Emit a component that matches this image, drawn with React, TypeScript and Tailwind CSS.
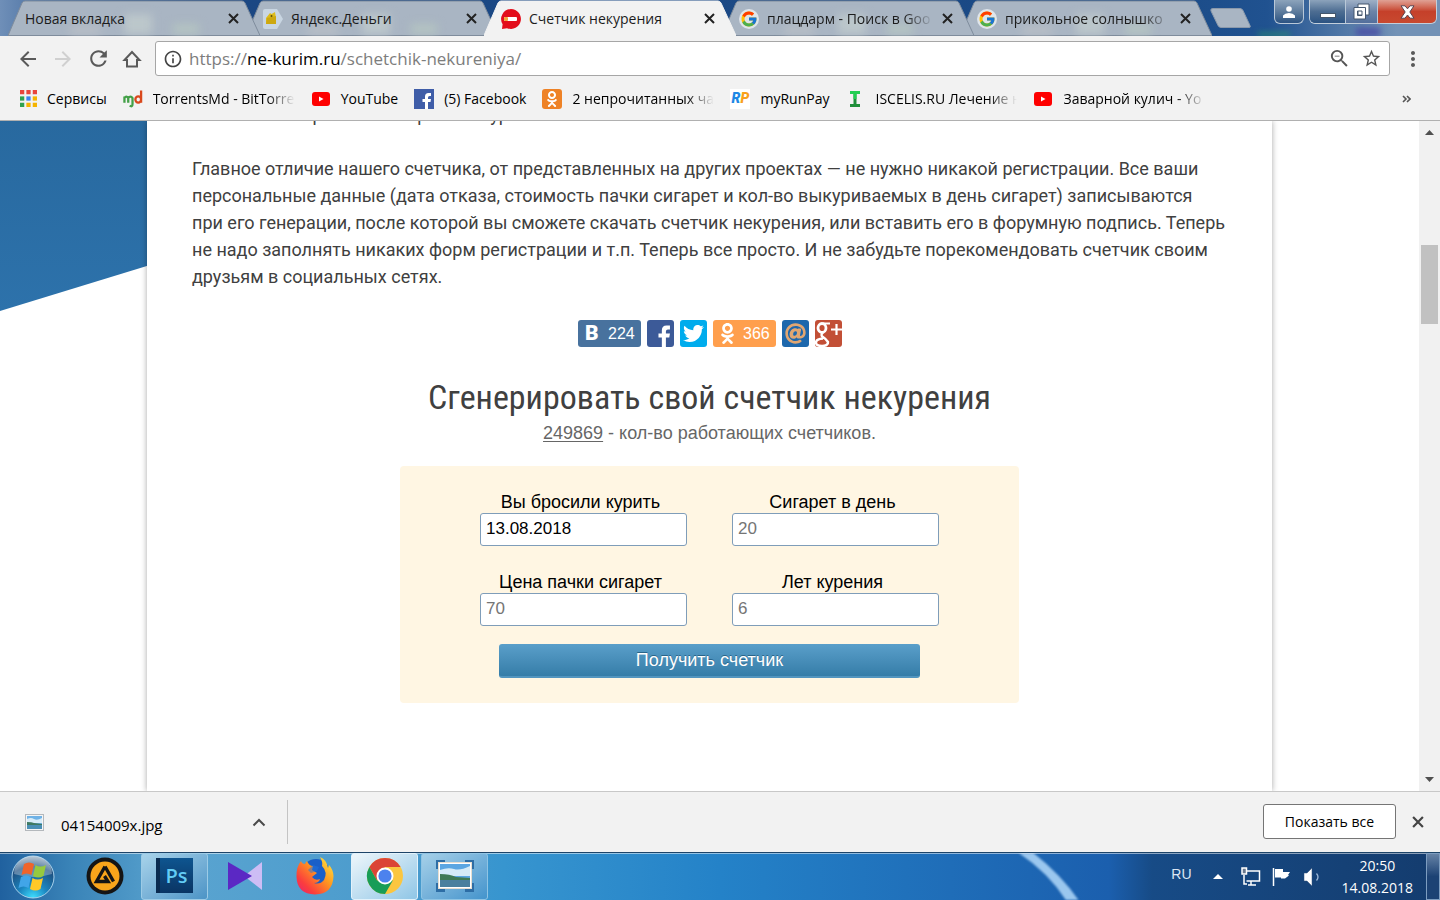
import { useState, type ReactNode } from 'react';
import {
  MdArrowBack,
  MdArrowForward,
  MdRefresh,
  MdOutlineInfo,
  MdZoomOut,
  MdStarBorder,
  MdMoreVert,
} from 'react-icons/md';
import { FaTwitter, FaOdnoklassniki, FaAt } from 'react-icons/fa';
import { FcGoogle } from 'react-icons/fc';

/* ---------- small icons ---------- */

function CrossIcon({ size = 11 }: { size?: number }) {
  return (
    <svg width={size} height={size} viewBox="0 0 11 11" fill="none" stroke="currentColor" strokeWidth="2">
      <path d="M1 1l9 9M10 1l-9 9" />
    </svg>
  );
}

function YandexMoneyIcon() {
  return (
    <svg width="20" height="20" viewBox="0 0 20 20">
      <path d="M2 0h12l6 10-6 10H2a2 2 0 0 1-2-2V2a2 2 0 0 1 2-2z" fill="#c9d6e2" />
      <path d="M3 9l4-5 1.500 1L12 3l1 6v6H3z" fill="#dcbb1c" />
      <path d="M3 15l1-6 9-2v8z" fill="#cda80f" />
      <circle cx="8.500" cy="7" r="1" fill="#5f5000" />
    </svg>
  );
}

function StopSmokeIcon() {
  return (
    <svg width="20" height="20" viewBox="0 0 20 20">
      <path d="M10 0a10 10 0 1 1-4 19.200L1 20l.6-4.800A10 10 0 0 1 10 0z" fill="#e30d1b" />
      <rect x="3" y="8" width="13" height="4" rx="1" fill="#fff" />
      <rect x="3" y="8" width="4" height="4" rx="1" fill="#f3a43b" />
    </svg>
  );
}

function GoogleIcon() {
  return (
    <span className="flex h-5 w-5 items-center justify-center rounded-full bg-[#dfe5eb]">
      <FcGoogle size={18} />
    </span>
  );
}

function HomeIcon() {
  return (
    <svg width="20" height="20" viewBox="0 0 20 20" fill="none" stroke="#5a5a5a" strokeWidth="2">
      <path d="M2.500 11L10 3l7.500 8H15v6.500H5V11z" />
    </svg>
  );
}

function AppsIcon() {
  const colors = ['#e8453c', '#e8453c', '#e8453c', '#2fa14f', '#3b82f0', '#f5b400', '#2fa14f', '#f5b400', '#f5b400'];
  return (
    <svg width="17" height="17" viewBox="0 0 16 16">
      {colors.map((c, i) => (
        <rect key={i} x={(i % 3) * 6} y={Math.floor(i / 3) * 6} width="4" height="4" fill={c} />
      ))}
    </svg>
  );
}

function MdLogo() {
  return (
    <svg width="20" height="20" viewBox="0 0 21 20" fill="none" strokeWidth="2.400">
      <path d="M1.500 14V7.500M1.500 9q2-3 4 0v5M5.500 9q2.500-3 4.500 0v6q0 4-3 2" stroke="#43a047" />
      <path d="M19 1v13M19 10.500a3 3.300 0 1 0-6 0a3 3.300 0 1 0 6 0" stroke="#d9481c" />
    </svg>
  );
}

function YoutubeIcon() {
  return (
    <svg width="20" height="20" viewBox="0 0 20 20">
      <rect x="1" y="3" width="18" height="14" rx="3" fill="#fe0000" />
      <path d="M8 7.500v5l4.500-2.500z" fill="#fff" />
    </svg>
  );
}

function FacebookIcon({ size, fill }: { size: number; fill: string }) {
  return (
    <svg width={size} height={size} viewBox="0 0 20 20">
      <rect width="20" height="20" fill={fill} />
      <path d="M11 20v-7H8.500v-3H11V7.500Q11 4 14.500 4H17v3h-1.500q-1.500 0-1.500 1.500V10h3l-.5 3H14v7z" fill="#fff" />
    </svg>
  );
}

function OkIcon() {
  return (
    <span className="flex h-5 w-5 items-center justify-center rounded-[3px] bg-[#ee8226]">
      <FaOdnoklassniki size={16} color="#fff" />
    </span>
  );
}

function RunPayIcon() {
  return (
    <span className="flex h-5 w-5 items-center justify-center bg-white font-['Roboto'] text-[14px] font-black italic">
      <span className="text-[#1e88e5]">R</span>
      <span className="text-[#f9a11b]">P</span>
    </span>
  );
}

function IscelisIcon() {
  return (
    <svg width="20" height="20" viewBox="0 0 20 20">
      <path d="M5 2h10v3h-3.500v10H15v3H5v-3h3.500V5H5z" fill="#1f8f3a" />
      <path d="M5 2h10v3h-3.500v5h-3V5H5z" fill="#22cf52" />
    </svg>
  );
}

function PictureIcon() {
  return (
    <svg width="19" height="17" viewBox="0 0 19 17">
      <rect x=".5" y=".5" width="18" height="16" fill="#f5f5f5" stroke="#b4b8bc" />
      <rect x="2" y="2" width="15" height="13" fill="#6fb2e6" />
      <path d="M2 5q4-2 7 0t8-1v5H2z" fill="#d8ecf8" />
      <path d="M2 8q5 0 7 1l8 1v2H2z" fill="#3f7a62" />
      <path d="M2 11h15v4H2z" fill="#4a8fb5" />
    </svg>
  );
}

/* ---------- tab strip ---------- */

interface Tab {
  title: string;
  icon?: ReactNode;
  active?: boolean;
  z: string;
}

const TABS: Tab[] = [
  { title: 'Новая вкладка', z: 'z-[4]' },
  { title: 'Яндекс.Деньги', icon: <YandexMoneyIcon />, z: 'z-[3]' },
  { title: 'Счетчик некурения', icon: <StopSmokeIcon />, active: true, z: 'z-[5]' },
  { title: 'плацдарм - Поиск в Goo', icon: <GoogleIcon />, z: 'z-[2]' },
  { title: 'прикольное солнышко', icon: <GoogleIcon />, z: 'z-[1]' },
];

function TabItem({ tab }: { tab: Tab }) {
  return (
    <div className={`relative -mr-[14px] flex h-9 w-[252px] min-w-0 items-center gap-2 pt-px pr-[21px] pl-[17px] ${tab.z}`}>
      <svg className="absolute inset-0 h-full w-full" viewBox="0 0 252 36" preserveAspectRatio="none">
        <path
          d="M0 35.500L14 3q1-2 3-2H234q2 0 3 2L252 35.500z"
          fill={tab.active ? '#f2f2f2' : '#a9b5c3'}
          stroke={tab.active ? '#f2f2f2' : '#7f8c9c'}
        />
        {!tab.active && (
          <g className="blur-[4px]">
            <rect x="116" y="14" width="28" height="20" fill="#bcc7cb" />
            <rect x="62" y="26" width="30" height="8" fill="#b9bfc6" />
            <rect x="165" y="24" width="26" height="10" fill="#b4c4c2" />
          </g>
        )}
      </svg>
      {tab.icon && <span className="relative shrink-0">{tab.icon}</span>}
      <span
        className={`relative min-w-0 flex-1 overflow-hidden whitespace-nowrap text-[14px] leading-5 text-[#1c1c1c] ${
          tab.title.length > 18 ? '[mask-image:linear-gradient(to_right,black_82%,transparent)]' : ''
        }`}
      >
        {tab.title}
      </span>
      <button aria-label="Закрыть вкладку" className="relative shrink-0 text-[#222]">
        <CrossIcon />
      </button>
    </div>
  );
}

function WindowControls() {
  const glass = 'border border-t-0 border-[#b9c8d8] bg-linear-to-b from-[#8ca3bb] via-[#5e7c9d] via-50% to-[#2b5382]';
  return (
    <div className="ml-auto flex items-start gap-[5px] pr-[3px]">
      <button aria-label="Пользователь" className={`flex h-6 w-[30px] items-center justify-center rounded-b-md ${glass}`}>
        <svg width="12" height="12" viewBox="0 0 12 12" fill="#fff">
          <circle cx="6" cy="3" r="2.800" />
          <path d="M0 12V9.500Q2 7 6 7t6 2.500V12z" />
        </svg>
      </button>
      <div className="flex h-6 overflow-hidden rounded-b-md border border-t-0 border-[#c3cfdb]">
        <button aria-label="Свернуть" className="flex w-[35px] items-end justify-center bg-linear-to-b from-[#8ca3bb] via-[#4d6d92] to-[#2b5382] pb-[5px]">
          <svg width="16" height="5" viewBox="0 0 16 5">
            <rect x=".5" y=".5" width="15" height="4" fill="#fff" stroke="#44566b" />
          </svg>
        </button>
        <button aria-label="Развернуть" className="flex w-[33px] items-center justify-center border-x border-[#b9c8d8] bg-linear-to-b from-[#9fb0c6] via-[#6c84a8] to-[#54709c]">
          <svg width="17" height="17" viewBox="0 0 17 17" fill="#fff" stroke="#45566c">
            <path d="M5 1h11v11H5z" />
            <path fillRule="evenodd" d="M1 4.500h11.500V16H1zM4.500 8v4.500H9V8z" />
          </svg>
        </button>
        <button aria-label="Закрыть" className="flex w-[58px] items-center justify-center bg-linear-to-b from-[#dfa195] via-[#c5402a] via-50% to-[#c8492f]">
          <svg width="15" height="14" viewBox="0 0 15 14">
            <path d="M1 .8h4l2.500 3 2.500-3h4L9.800 7l4.200 6.200h-4L7.500 10 5 13.200H1L5.200 7z" fill="#fff" stroke="#5b4550" />
          </svg>
        </button>
      </div>
    </div>
  );
}

function TabStrip() {
  return (
    <header className="relative flex h-9 shrink-0 overflow-hidden bg-[linear-gradient(90deg,#6f8fb8_0%,#4c72a3_3%,#1b4783_14%,#1a4a86_80%,#205290_88%,#7392b6_97%)] pl-2">
      {TABS.map((t) => (
        <TabItem key={t.title} tab={t} />
      ))}
      <button aria-label="Новая вкладка" className="ml-[12px] self-center">
        <svg width="41" height="20" viewBox="0 0 41 20">
          <path d="M3 .5h27q2 0 3 2l7 15q1 2-1 2H11q-2 0-3-2L1 3Q0 .5 3 .5z" fill="#a9b5c3" stroke="#8b99ab" />
        </svg>
      </button>
      <WindowControls />
      {/* wallpaper showing through the glass */}
      <div className="absolute right-[150px] bottom-0 h-[3px] w-8 bg-[#2f9a6c] blur-[3px]" />
      <div className="absolute right-[60px] bottom-0 h-2 w-6 bg-[#4a4fa5] blur-[3px]" />
    </header>
  );
}

/* ---------- toolbar + bookmarks ---------- */

function Toolbar() {
  return (
    <div className="flex h-[45px] shrink-0 items-center bg-[#f2f2f2] pr-[15px] pl-4 text-[#5a5a5a]">
      <div className="flex items-center gap-[11px]">
        <button aria-label="Назад"><MdArrowBack size={24} /></button>
        <button aria-label="Вперед" className="text-[#d0d0d0]"><MdArrowForward size={24} /></button>
        <button aria-label="Обновить"><MdRefresh size={25} /></button>
        <button aria-label="Домой"><HomeIcon /></button>
      </div>
      <label className="mr-[11px] ml-[13px] flex h-[35px] min-w-0 flex-1 items-center rounded-[3px] border border-[#a6a6a6] bg-white px-[7px]">
        <MdOutlineInfo size={20} className="mr-[6px] shrink-0 text-[#444]" />
        <span className="min-w-0 flex-1 whitespace-nowrap text-[17px] leading-6 text-[#7d7d7d]">
          https://<span className="text-black">ne-kurim.ru</span>/schetchik-nekureniya/
        </span>
        <span className="flex items-center gap-[10px] text-[#555]">
          <MdZoomOut size={23} />
          <MdStarBorder size={21} />
        </span>
      </label>
      <button aria-label="Меню"><MdMoreVert size={24} /></button>
    </div>
  );
}

const BOOKMARKS: { title: string; icon: ReactNode; faded?: boolean }[] = [
  { title: 'Сервисы', icon: <AppsIcon /> },
  { title: 'TorrentsMd - BitTorre', icon: <MdLogo />, faded: true },
  { title: 'YouTube', icon: <YoutubeIcon /> },
  { title: '(5) Facebook', icon: <FacebookIcon size={20} fill="#3f5da8" /> },
  { title: '2 непрочитанных ча', icon: <OkIcon />, faded: true },
  { title: 'myRunPay', icon: <RunPayIcon /> },
  { title: 'ISCELIS.RU Лечение н', icon: <IscelisIcon />, faded: true },
  { title: 'Заварной кулич - Yo', icon: <YoutubeIcon />, faded: true },
];

function BookmarksBar() {
  return (
    <nav className="flex h-10 shrink-0 items-center gap-4 border-b border-[#b0b0b0] bg-[#f2f2f2] pr-[29px] pb-1 pl-5 text-[14px] text-black">
      {BOOKMARKS.map((b) => (
        <a key={b.title} href="#" className="flex shrink-0 items-center gap-[10px]">
          {b.icon}
          <span
            className={
              b.faded
                ? 'w-[142px] overflow-hidden whitespace-nowrap [mask-image:linear-gradient(to_right,black_80%,transparent)]'
                : 'whitespace-nowrap'
            }
          >
            {b.title}
          </span>
        </a>
      ))}
      <button aria-label="Другие закладки" className="ml-auto text-[#555]">
        <svg width="9" height="8" viewBox="0 0 9 8" fill="none" stroke="currentColor" strokeWidth="1.600">
          <path d="M1 1l3 3-3 3M5 1l3 3-3 3" />
        </svg>
      </button>
    </nav>
  );
}

/* ---------- page ---------- */

function ShareButtons() {
  const base = 'flex h-[27px] items-center overflow-hidden rounded-[3px]';
  return (
    <div className="mt-[30px] flex justify-center gap-[6px] pl-px font-['Liberation_Sans',sans-serif] text-base text-white">
      <a href="#" className={`${base} w-[63px] bg-[#48729e]`}>
        <b className="w-[30px] pl-[7px] font-['Roboto'] text-[21px] font-black">В</b>224
      </a>
      <a href="#" aria-label="Facebook" className={`${base} w-[27px]`}>
        <FacebookIcon size={27} fill="#3c5a98" />
      </a>
      <a href="#" aria-label="Twitter" className={`${base} w-[27px] justify-center bg-[#00aced]`}>
        <FaTwitter size={21} />
      </a>
      <a href="#" className={`${base} w-[63px] bg-[#ff9f4d]`}>
        <span className="w-[30px] pl-1"><FaOdnoklassniki size={21} /></span>366
      </a>
      <a href="#" aria-label="Мой Мир" className={`${base} w-[27px] justify-center bg-[#1d67ac] text-[#e0a672]`}>
        <FaAt size={21} />
      </a>
      <a href="#" aria-label="Google+" className={`${base} w-[27px] justify-center bg-[#c24f36]`}>
        <svg width="27" height="27" viewBox="0 0 27 27" fill="none" stroke="#fff">
          <ellipse cx="7" cy="8" rx="4" ry="4.500" strokeWidth="2.800" />
          <path d="M15 3.500H8" strokeWidth="2" />
          <path d="M8 12.500q-3 2.500 0 4.500t5 5q0 4-6 4t-6-3.500q0-3.500 7-4" strokeWidth="2.400" />
          <path d="M16 9.500h11M21.500 4v11" strokeWidth="2.200" />
        </svg>
      </a>
    </div>
  );
}

interface FieldProps {
  id: string;
  label: string;
  placeholder?: string;
  value: string;
  onChange: (v: string) => void;
}

function Field({ id, label, placeholder, value, onChange }: FieldProps) {
  return (
    <div className="flex flex-col">
      <label htmlFor={id} className="h-[21px] pr-[6px] text-center text-[18px] leading-[21px]">
        {label}
      </label>
      <input
        id={id}
        type="text"
        value={value}
        placeholder={placeholder}
        onChange={(e) => onChange(e.target.value)}
        className="h-[33px] w-full rounded-[3px] border border-[#7f9db9] bg-white px-[5px] pb-[2px] text-[17px] text-black outline-none placeholder:text-[#757575]"
      />
    </div>
  );
}

function CounterForm() {
  const [date, setDate] = useState('13.08.2018');
  const [perDay, setPerDay] = useState('');
  const [price, setPrice] = useState('');
  const [years, setYears] = useState('');

  return (
    <form
      onSubmit={(e) => e.preventDefault()}
      className="mx-auto mt-[19px] flex w-[619px] max-w-full flex-col items-center rounded-[4px] bg-[#fff6e3] pt-[26px] pb-[25px] text-black"
    >
      <div className="grid grid-cols-[207px_207px] gap-x-[45px] gap-y-[26px]">
        <Field id="date" label="Вы бросили курить" value={date} onChange={setDate} />
        <Field id="perDay" label="Сигарет в день" placeholder="20" value={perDay} onChange={setPerDay} />
        <Field id="price" label="Цена пачки сигарет" placeholder="70" value={price} onChange={setPrice} />
        <Field id="years" label="Лет курения" placeholder="6" value={years} onChange={setYears} />
      </div>
      <button
        type="submit"
        className="mt-[18px] h-[34px] w-[421px] rounded-[3px] border-b-2 border-[#5295bf] bg-linear-to-b from-[#5a9fca] to-[#357da8] text-[18px] text-white [text-shadow:0_-1px_0_#2a6488]"
      >
        Получить счетчик
      </button>
    </form>
  );
}

function ScrollBar() {
  return (
    <div className="flex w-[21px] shrink-0 flex-col items-center bg-[#f1f1f1] py-[9px]">
      <svg width="9" height="5" viewBox="0 0 9 5" className="shrink-0"><path d="M0 5l4.500-5L9 5z" fill="#505050" /></svg>
      <div className="mt-[110px] h-[79px] w-[17px] shrink-0 bg-[#c1c1c1]" />
      <svg width="9" height="5" viewBox="0 0 9 5" className="mt-auto shrink-0"><path d="M0 0l4.500 5L9 0z" fill="#505050" /></svg>
    </div>
  );
}

function Page() {
  return (
    <div className="flex min-h-0 flex-1 overflow-hidden bg-white">
      <div className="relative min-w-0 flex-1 overflow-hidden">
        <div className="absolute top-0 left-0 h-[190px] w-[620px] bg-linear-to-b from-[#28699f] to-[#2d72ab] [clip-path:polygon(0_0,100%_0,0_100%)]" />
        <main className="relative mx-auto h-full max-w-[1125px] overflow-hidden bg-white px-[45px] font-['Liberation_Sans',sans-serif] shadow-[0_0_6px_rgba(0,0,0,0.35)]">
          <div className="-mt-[20px] font-['Roboto',sans-serif] text-[18px] leading-[27px] text-[#404040]">
            <p className="mb-[27px]">Поможет вам решать и мерить некурение</p>
            <p>
              Главное отличие нашего счетчика, от представленных на других проектах — не нужно никакой регистрации. Все
              ваши персональные данные (дата отказа, стоимость пачки сигарет и кол-во выкуриваемых в день сигарет)
              записываются при{'\u00a0'}его генерации, после которой вы сможете скачать счетчик некурения, или вставить
              его в форумную подпись. Теперь не{'\u00a0'}надо заполнять никаких форм регистрации и т.п. Теперь все
              просто. И не забудьте порекомендовать счетчик своим друзьям в социальных сетях.
            </p>
          </div>
          <ShareButtons />
          <h2 className="mt-[30px] text-center font-['Roboto_Condensed',sans-serif] text-[34px] leading-10 text-[#404040]">
            Сгенерировать свой счетчик некурения
          </h2>
          <p className="mt-[3px] text-center text-[18px] leading-[27px] text-[#666]">
            <u className="underline-offset-2">249869</u> - кол-во работающих счетчиков.
          </p>
          <CounterForm />
        </main>
      </div>
      <ScrollBar />
    </div>
  );
}

/* ---------- download shelf ---------- */

function DownloadBar() {
  return (
    <div className="flex h-[61px] shrink-0 items-center border-t border-[#c8c8c8] bg-[#f2f2f2] pr-4 pl-[25px] text-black">
      <div className="flex h-[44px] w-[263px] items-center border-r border-[#c4c4c4] pr-[21px]">
        <PictureIcon />
        <span className="ml-[17px] flex-1 pt-[6px] text-[15px]">04154009x.jpg</span>
        <button aria-label="Меню загрузки">
          <svg width="14" height="9" viewBox="0 0 14 9" fill="none" stroke="#4a4a4a" strokeWidth="2"><path d="M1.500 7.500L7 2l5.500 5.500" /></svg>
        </button>
      </div>
      <button className="mb-px ml-auto h-[35px] w-[133px] rounded-[3px] border border-[#757575] bg-white text-[14px]">Показать все</button>
      <button aria-label="Закрыть панель" className="mb-px ml-4 text-[#444]">
        <CrossIcon size={12} />
      </button>
    </div>
  );
}

/* ---------- taskbar ---------- */

function StartOrb() {
  return (
    <svg width="44" height="44" viewBox="0 0 44 44">
      <defs>
        <radialGradient id="orb" cx=".5" cy="1" r="1">
          <stop offset="0" stopColor="#3fe0ff" />
          <stop offset=".35" stopColor="#1b86c0" />
          <stop offset=".75" stopColor="#1d4f80" />
          <stop offset="1" stopColor="#9fb4c6" />
        </radialGradient>
      </defs>
      <circle cx="22" cy="22" r="21" fill="url(#orb)" stroke="#a7d0ea" />
      <path d="M3 19a19 18 0 0 1 38 0q-19 6-38 0z" fill="#fff" opacity=".3" />
      <path d="M13 9q5-3 10 0l-2.500 11q-5-3-10 0z" fill="#f0642a" />
      <path d="M24.500 10q5 3 10.500 0l-2.500 11q-5 3-10.500 0z" fill="#96c93f" />
      <path d="M10 22q5-3 10 0l-2.500 11q-5-3-10 0z" fill="#41a5e8" />
      <path d="M21.500 23q5 3 10.500 0l-2.500 11q-5 3-10.500 0z" fill="#ffc928" />
    </svg>
  );
}

function AimpIcon() {
  return (
    <svg width="38" height="38" viewBox="0 0 38 38">
      <circle cx="19" cy="19" r="18.500" fill="#151515" />
      <circle cx="19" cy="19" r="14.500" fill="#f9a51b" />
      <path d="M19 9.500L10.500 24.500H22l-3.500-5.500M19 9.500l8.500 15" fill="none" stroke="#151515" strokeWidth="3.400" />
    </svg>
  );
}

function PhotoshopIcon() {
  return (
    <span className="flex h-[35px] w-[37px] items-center justify-center border-l-4 border-[#0a2b50] bg-linear-to-b from-[#0e5590] to-[#0a3564] text-[20px] font-semibold text-[#63ccf5]">
      Ps
    </span>
  );
}

function KmpIcon() {
  return (
    <svg width="36" height="30" viewBox="0 0 36 30">
      <path d="M35 1v28L17 15z" fill="#cdbdf5" />
      <path d="M1 1v28l24-14z" fill="#5b28c4" />
    </svg>
  );
}

function FirefoxIcon() {
  return (
    <svg width="38" height="38" viewBox="0 0 38 38">
      <defs>
        <linearGradient id="fox" x1="1" y1="0" x2="0" y2="1">
          <stop offset="0" stopColor="#fff04a" />
          <stop offset=".4" stopColor="#ff9a1f" />
          <stop offset=".75" stopColor="#fb3d3d" />
          <stop offset="1" stopColor="#e3207a" />
        </linearGradient>
      </defs>
      <circle cx="20" cy="16" r="14" fill="#1a5fc8" />
      <path d="M24 0q3 5 2 9 6 6 2 14-4 5-10 3 5 0 6-4-5 2-8-2l5-4-5-3 1-4q-4 0-6-5-2 2-2 3-3 0-4-3Q0 10 0.500 20 1 37 19 37.500 37 37 37.500 19 37 12 33 8l-1 3Q31 3 24 0z" fill="url(#fox)" />
      <path d="M17 8l6 2-2 4-6 2-3-3z" fill="#1f74e0" opacity=".5" />
    </svg>
  );
}

function ChromeIcon() {
  return (
    <svg width="38" height="38" viewBox="0 0 38 38">
      <circle cx="19" cy="19" r="18" fill="#fbc640" />
      <path d="M3.400 10A18 18 0 0 1 34.600 10H19L11 23.500z" fill="#db4437" />
      <path d="M3.400 10A18 18 0 0 0 19 37L26.800 23.500 11 23.500z" fill="#189d57" />
      <circle cx="19" cy="19" r="8.500" fill="#fff" />
      <circle cx="19" cy="19" r="6.600" fill="#4c82ee" />
    </svg>
  );
}

function PhotoViewerIcon() {
  return (
    <svg width="38" height="32" viewBox="0 0 38 32">
      <path d="M0 0h9v9H0zM29 0h9v9h-9zM0 23h9v9H0zM29 23h9v9h-9z" fill="#2d6da5" />
      <rect x="2.500" y="2.500" width="33" height="26" fill="#fff" stroke="#e6ddd0" />
      <rect x="4" y="4" width="30" height="23" fill="#5ba6e2" />
      <path d="M4 10q8-3 14-1t16-3v10H4z" fill="#d5ebf8" />
      <path d="M4 14q10 0 16 3l14 1v3H4z" fill="#3f7a55" />
      <path d="M4 20h30v7H4z" fill="#4a7f9e" />
    </svg>
  );
}

const TASKS: { name: string; icon: ReactNode; frame: string }[] = [
  { name: 'AIMP', icon: <AimpIcon />, frame: 'border-transparent' },
  { name: 'Photoshop', icon: <PhotoshopIcon />, frame: 'border-[#9ccbe6] bg-linear-to-br from-[#a8d3ea] to-[#4c94c6]' },
  { name: 'KMPlayer', icon: <KmpIcon />, frame: 'border-transparent' },
  { name: 'Firefox', icon: <FirefoxIcon />, frame: 'border-transparent' },
  { name: 'Chrome', icon: <ChromeIcon />, frame: 'border-[#e2f2fb] bg-linear-to-br from-[#eef6fa] to-[#8fc6e6]' },
  { name: 'Просмотр', icon: <PhotoViewerIcon />, frame: 'border-[#8fc4e4] bg-linear-to-br from-[#a5d0e8] to-[#4394cc]' },
];

function Tray() {
  return (
    <div className="relative ml-auto flex h-full items-center text-[14px] text-white">
      <span className="mr-[21px] pb-1 font-['Liberation_Sans'] text-[#dbe6f2]">RU</span>
      <svg width="10" height="5" viewBox="0 0 10 5" className="mr-[18px]"><path d="M0 5l5-5 5 5z" fill="#fff" /></svg>
      <svg width="20" height="20" viewBox="0 0 20 20" className="mr-[11px]" fill="none" stroke="#fff" strokeWidth="1.500">
        <path d="M6 4h12.500v10H5.500M10 14.500v3M7 18h8M3 8v9h3" />
        <rect x="1" y="1" width="4.500" height="6" fill="#6b7b90" />
      </svg>
      <svg width="19" height="20" viewBox="0 0 19 20" className="mr-3">
        <path d="M1.500 1v18" stroke="#fff" strokeWidth="1.500" />
        <path d="M3 2h8v3h7l-2 3 1 .5-4 3H9v-1H3z" fill="#fff" />
      </svg>
      <svg width="17" height="20" viewBox="0 0 17 20" className="mr-[22px]">
        <path d="M1 6h3l5-5v18l-5-5H1z" fill="#fff" stroke="#31507a" strokeWidth=".5" />
        <path d="M13.500 6.500q3 3.500 0 7" fill="none" stroke="#9db8d8" strokeWidth="1.300" />
      </svg>
      <div className="mr-[13px] pt-px text-center leading-[22px]">
        <div>20:50</div>
        <div>14.08.2018</div>
      </div>
      <button aria-label="Рабочий стол" className="h-full w-[14px] border border-[#7d9dc0] bg-linear-to-b from-[#6683a6] via-[#1c4274] to-[#1c4274]" />
    </div>
  );
}

function Taskbar() {
  return (
    <footer className="relative flex h-12 shrink-0 items-center overflow-hidden border-t border-[#1d4468] bg-[linear-gradient(90deg,#20619f_0%,#3a84b8_5%,#5aa4d0_12%,#4a9bcd_28%,#3795cf_35%,#2482c8_50%,#1f6db8_66%,#1b5fae_77%,#174b86_80%,#143c6e_100%)]">
      <svg className="absolute top-0 right-[340px] h-full blur-[1px]" width="90" height="48" viewBox="0 0 90 48">
        <path d="M8 0h15q28 22 46 48H56Q38 20 8 0z" fill="#a9d2f5" opacity=".9" />
      </svg>
      <div className="absolute inset-x-0 top-0 h-px bg-white/50" />
      <button aria-label="Пуск" className="relative flex w-[71px] pl-[11px]"><StartOrb /></button>
      <div className="relative flex gap-[3px]">
        {TASKS.map((t) => (
          <button key={t.name} aria-label={t.name} className={`flex h-[47px] w-[67px] items-center justify-center rounded-[3px] border pb-[2px] ${t.frame}`}>
            {t.icon}
          </button>
        ))}
      </div>
      <Tray />
    </footer>
  );
}

export default function App() {
  return (
    <div className="flex h-screen flex-col overflow-hidden font-['Open_Sans',sans-serif]">
      <TabStrip />
      <Toolbar />
      <BookmarksBar />
      <Page />
      <DownloadBar />
      <Taskbar />
    </div>
  );
}
